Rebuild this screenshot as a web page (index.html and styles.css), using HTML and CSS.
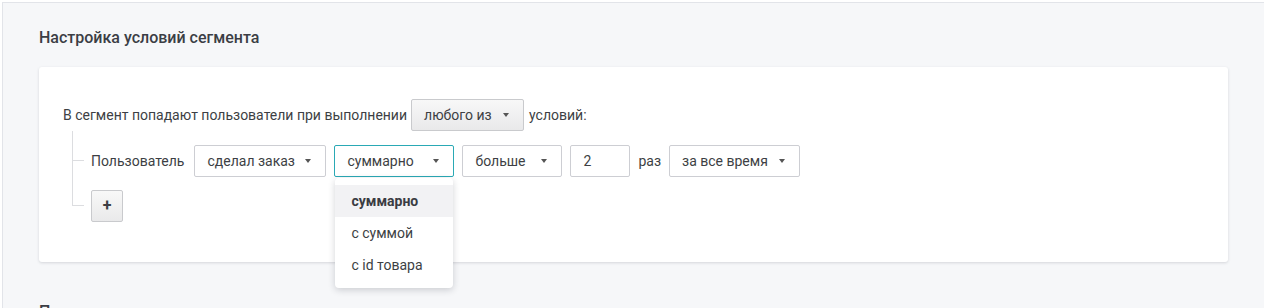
FILE: index.html
```html
<!DOCTYPE html>
<html lang="ru">
<head>
    <meta charset="UTF-8">
    <meta name="viewport" content="width=device-width, initial-scale=1.0">
    <title>Настройка условий сегмента</title>
    <link rel="stylesheet" href="styles.css">
</head>
<body>
    <div class="page">
        <h2 class="section-title">Настройка условий сегмента</h2>
        <div class="card">
            <div class="rule-line">
                <span>В сегмент попадают пользователи при выполнении</span>
                <button class="btn btn-any">любого из <span class="caret"></span></button>
                <span>условий:</span>
            </div>
            <div class="tree">
                <div class="tree-row">
                    <span class="label label-subject">Пользователь</span>
                    <div class="select w-action">сделал заказ <span class="caret"></span></div>
                    <div class="select select-open w-mode">
                        суммарно <span class="caret"></span>
                        <ul class="dropdown">
                            <li class="active">суммарно</li>
                            <li>с суммой</li>
                            <li>с id товара</li>
                        </ul>
                    </div>
                    <div class="select w-compare">больше <span class="caret"></span></div>
                    <input class="field" type="text" value="2">
                    <span class="label">раз</span>
                    <div class="select w-period">за все время <span class="caret"></span></div>
                </div>
                <div class="tree-row">
                    <button class="btn btn-add">+</button>
                </div>
            </div>
        </div>
        <h2 class="section-title">Пользователи в сегменте</h2>
    </div>
</body>
</html>
```

FILE: styles.css
```css
body {
    margin: 0;
    background-color: #fff;
    font-family: Roboto, "Liberation Sans", Arial, sans-serif;
    font-size: 14px;
    color: #3d3f44;
}

.page {
    margin: 2px 0 0 2px;
    border-top: 1px solid #e2e4e9;
    border-left: 1px solid #e2e4e9;
    background-color: #f6f7f9;
    padding: 25px 36px 0 36px;
    height: 400px;
}

.section-title {
    margin: 0 0 19px 0;
    font-size: 16px;
    line-height: 20px;
    font-weight: 500;
    color: #3b3e45;
}

.card {
    background-color: #fff;
    border-radius: 3px;
    box-shadow: 0 1px 3px rgba(40, 45, 60, 0.16);
    padding: 32px 24px 40px 24px;
    margin-bottom: 40px;
}

.rule-line {
    display: flex;
    align-items: center;
    height: 32px;
}

.btn {
    font-family: inherit;
    font-size: 14px;
    color: #3d3f44;
    height: 32px;
    border: 1px solid #c9cacd;
    border-radius: 2px;
    background: linear-gradient(#f8f8f8, #e9e9ea);
    cursor: pointer;
}

.btn-any {
    display: flex;
    align-items: center;
    justify-content: space-between;
    width: 113px;
    padding: 0 14px 0 12px;
    margin: 0 5px 0 4px;
}

.btn-add {
    width: 32px;
    padding: 0;
    font-size: 16px;
    font-weight: 700;
    line-height: 30px;
}

.caret {
    display: inline-block;
    width: 0;
    height: 0;
    border-left: 3.5px solid transparent;
    border-right: 3.5px solid transparent;
    border-top: 4px solid #555;
}

.tree {
    position: relative;
    margin-left: 9px;
    padding: 14px 0 0 19px;
    display: flex;
    flex-direction: column;
    gap: 13px;
}

.tree::before {
    content: "";
    position: absolute;
    left: 0;
    top: 0;
    bottom: 17px;
    width: 1px;
    background-color: #dcdde0;
}

.tree-row {
    position: relative;
    display: flex;
    align-items: center;
    gap: 8px;
    height: 32px;
}

.tree-row::before {
    content: "";
    position: absolute;
    left: -19px;
    top: 15px;
    width: 12px;
    height: 1px;
    background-color: #dcdde0;
}

.label-subject {
    margin-right: 2px;
}

.select {
    position: relative;
    box-sizing: border-box;
    display: flex;
    align-items: center;
    justify-content: space-between;
    height: 32px;
    padding: 0 14px 0 12px;
    border: 1px solid #cdced3;
    border-radius: 2px;
    background-color: #fff;
}

.select-open {
    border-color: #2aa9b5;
}

.w-action { width: 132px; }
.w-mode { width: 120px; }
.w-compare { width: 100px; }
.w-period { width: 131px; }

.field {
    box-sizing: border-box;
    width: 60px;
    height: 32px;
    padding: 0 12px;
    border: 1px solid #cdced3;
    border-radius: 2px;
    font-family: inherit;
    font-size: 14px;
    color: #3d3f44;
}

.dropdown {
    position: absolute;
    top: calc(100% + 2px);
    left: 0;
    right: 0;
    margin: 0;
    padding: 7px 0;
    list-style: none;
    background-color: #fff;
    border-radius: 4px;
    box-shadow: 0 2px 7px rgba(30, 35, 50, 0.2);
    z-index: 5;
}

.dropdown li {
    height: 32px;
    line-height: 32px;
    padding-left: 16px;
}

.dropdown li.active {
    background-color: #f2f2f4;
    font-weight: 700;
    color: #3a3c42;
}
```
